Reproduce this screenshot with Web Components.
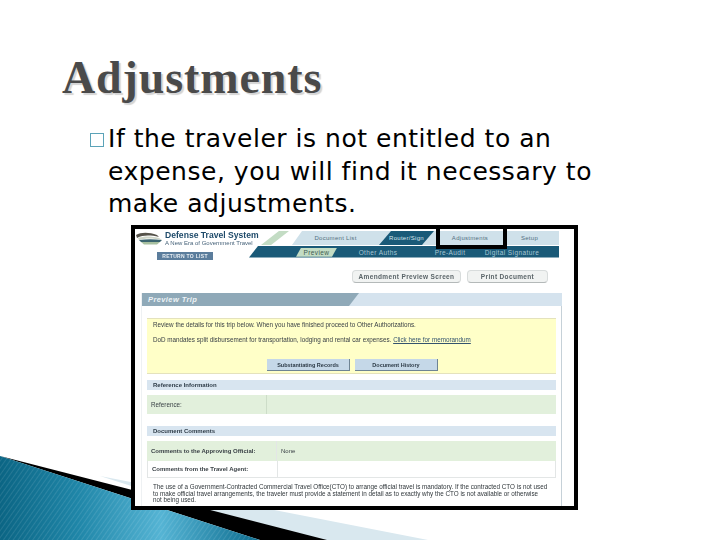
<!DOCTYPE html>
<html>
<head>
<meta charset="utf-8">
<style>
  html, body { margin: 0; padding: 0; background: #fff; }
</style>
</head>
<body>
<slide-page>
  <slide-title>Adjustments</slide-title>
  <slide-bullet>If the traveler is not entitled to an expense, you will find it necessary to make adjustments.</slide-bullet>
  <dts-shot>
    <dts-header></dts-header>
    <dts-actions></dts-actions>
    <dts-panel></dts-panel>
  </dts-shot>
</slide-page>

<script>
class SlidePage extends HTMLElement {
    constructor() {
        super();
        this.attachShadow({ mode: 'open' });
        this.shadowRoot.innerHTML = `
            <style>
                :host { display: block; position: relative; width: 720px; height: 540px; overflow: hidden; background: #fff; }
                .corner { position: absolute; left: 0; top: 0; }
                .content { position: relative; display: flex; flex-direction: column; }
            </style>
            <svg class="corner" width="720" height="540" viewBox="0 0 720 540">
                <defs>
                    <linearGradient id="teal" x1="0" y1="0" x2="1" y2="0">
                        <stop offset="0" stop-color="#0b6584"/>
                        <stop offset="0.3" stop-color="#1f86a8"/>
                        <stop offset="0.62" stop-color="#55b4d4"/>
                        <stop offset="1" stop-color="#0d6c8e"/>
                    </linearGradient>
                    <pattern id="stripes" width="4" height="4" patternUnits="userSpaceOnUse" patternTransform="rotate(35)">
                        <rect width="1" height="4" fill="#ffffff" opacity="0.1"/>
                    </pattern>
                </defs>
                <polygon points="100,476 428,540 300,540" fill="#d9e8ef"/>
                <polygon points="0,456 327,540 260,540" fill="#000"/>
                <polygon points="0,456 260,540 0,540" fill="url(#teal)"/>
                <polygon points="0,456 260,540 0,540" fill="url(#stripes)"/>
            </svg>
            <div class="content"><slot></slot></div>
        `;
    }
}

class SlideTitle extends HTMLElement {
    constructor() {
        super();
        this.attachShadow({ mode: 'open' });
        this.shadowRoot.innerHTML = `
            <style>
                :host {
                    display: block;
                    height: 52px;
                    padding: 52px 0 0 62px;
                    font: bold 46px/52px "Liberation Serif", serif;
                    letter-spacing: 0.9px;
                    color: #4a4a4a;
                    text-shadow: 2px 2px 1px #d4d4d4;
                }
            </style>
            <slot></slot>
        `;
    }
}

class SlideBullet extends HTMLElement {
    constructor() {
        super();
        this.attachShadow({ mode: 'open' });
        this.shadowRoot.innerHTML = `
            <style>
                :host {
                    display: flex;
                    height: 102px;
                    padding: 19px 0 0 90px;
                    font: 25px/32.5px "DejaVu Sans", sans-serif;
                    letter-spacing: 0.52px;
                    color: #000;
                }
                .box { flex: none; width: 12px; height: 12px; margin: 10px 4px 0 0; border: 1.5px solid #5ba3b8; }
                .text { width: 500px; }
            </style>
            <span class="box"></span>
            <div class="text"><slot></slot></div>
        `;
    }
}

class DtsShot extends HTMLElement {
    constructor() {
        super();
        this.attachShadow({ mode: 'open' });
        this.shadowRoot.innerHTML = `
            <style>
                :host {
                    display: flex;
                    flex-direction: column;
                    box-sizing: border-box;
                    width: 447px;
                    height: 285px;
                    margin-left: 131px;
                    border: 4px solid #000;
                    background: #fff;
                    overflow: hidden;
                    font-family: "Liberation Sans", sans-serif;
                }
            </style>
            <slot></slot>
        `;
    }
}

class DtsHeader extends HTMLElement {
    constructor() {
        super();
        this.attachShadow({ mode: 'open' });
        this.shadowRoot.innerHTML = `
            <style>
                :host { display: flex; height: 30px; padding-top: 2px; position: relative; filter: blur(0.3px); }
                .brand { width: 127px; flex: none; }
                .top { display: flex; gap: 2px; height: 14px; }
                .logo { flex: none; }
                .name { font-size: 8.6px; line-height: 9px; font-weight: bold; color: #1e4a6a; white-space: nowrap; }
                .tag { font-size: 6px; line-height: 7px; color: #47637a; white-space: nowrap; }
                .back {
                    width: 56px; height: 8px; margin: 7px 0 0 22px;
                    background: #5b7d9c; color: #e8eef3;
                    font: bold 5px/8px "Liberation Sans", sans-serif;
                    text-align: center; letter-spacing: 0.3px; white-space: nowrap;
                }
                .nav { flex: none; width: 298px; margin-left: -1px; }
                .row1 { display: flex; height: 14px; align-items: stretch; font-size: 6px; letter-spacing: 0.3px; color: #54707f; }
                .slant { width: 28px; background: #c3dcc4; clip-path: polygon(64% 0, 100% 0, 36% 100%, 0 100%); flex: none; }
                .tabs { flex: 1; display: grid; grid-template-columns: 87px 55px 72px 1fr; background: #cfe1ea;
                        clip-path: polygon(10px 0, 100% 0, 100% 100%, 0 100%); margin-left: 3px; }
                .tab { display: flex; align-items: center; justify-content: center; }
                .tab.last { padding-right: 6px; }
                .tab.active { background: #1a5a78; color: #d9e6ed; clip-path: polygon(12px 0, 100% 0, calc(100% - 12px) 100%, 0 100%); }
                .row2 { display: flex; height: 11.5px; padding-top: 1px; box-sizing: border-box; margin: 1px 0 0 -12px; background: #1a5a78; color: #a9c6d4;
                        font-size: 6.5px; letter-spacing: 0.4px; align-items: center; white-space: nowrap;
                        clip-path: polygon(9px 0, 100% 0, 100% 100%, 0 100%); }
                .row2 span { text-align: center; flex: none; }
                .row2 .on { width: 41px; height: 9px; line-height: 9px; margin-left: 47px; margin-right: 16px;
                            background: #c3dcc4; color: #3c5a52;
                            clip-path: polygon(5px 0, 100% 0, calc(100% - 5px) 100%, 0 100%); }
            </style>
            <div class="brand">
                <div class="top">
                    <svg class="logo" width="28" height="14" viewBox="0 0 28 14">
                        <path d="M1 4 C6 1 14 1 22 4 L24 6 C15 4 8 4 2 7Z" fill="#55524a"/>
                        <path d="M3 7 C9 5 16 5 24 7 L27 9 C18 7 10 7 4 9Z" fill="#cfd6c8"/>
                        <path d="M4 9 C11 8 19 8 27 9 L25 11 L6 11Z" fill="#3b6470"/>
                        <path d="M6 11 L25 11 L22 13.5 L9 13.5Z" fill="#a8c0a0"/>
                    </svg>
                    <div>
                        <div class="name">Defense Travel System</div>
                        <div class="tag">A New Era of Government Travel</div>
                    </div>
                </div>
                <div class="back">RETURN TO LIST</div>
            </div>
            <div class="nav">
                <div class="row1">
                    <div class="slant"></div>
                    <div class="tabs">
                        <div class="tab">Document List</div>
                        <div class="tab active">Router/Sign</div>
                        <div class="tab">Adjustments</div>
                        <div class="tab last">Setup</div>
                    </div>
                </div>
                <div class="row2">
                    <span class="on">Preview</span>
                    <span style="width:50px">Other Auths</span>
                    <span style="width:50px;margin-left:22px">Pre-Audit</span>
                    <span style="width:74px">Digital Signature</span>
                </div>
            </div>
        `;
    }
}

class DtsActions extends HTMLElement {
    constructor() {
        super();
        this.attachShadow({ mode: 'open' });
        this.shadowRoot.innerHTML = `
            <style>
                :host { display: flex; gap: 6px; height: 13px; margin: 9px 0 10px 217px; filter: blur(0.3px); }
                .btn {
                    display: flex; align-items: center; justify-content: center;
                    height: 13px; box-sizing: border-box;
                    border: 1px solid #d8dcdc; border-bottom-color: #b4b9b9; border-radius: 4px;
                    background: #f1f3f2; color: #5a6468;
                    font: bold 6.5px "Liberation Sans", sans-serif; letter-spacing: 0.35px; white-space: nowrap;
                }
            </style>
            <div class="btn" style="width:109px">Amendment Preview Screen</div>
            <div class="btn" style="width:81px">Print Document</div>
        `;
    }
}

class DtsPanel extends HTMLElement {
    constructor() {
        super();
        this.attachShadow({ mode: 'open' });
        this.shadowRoot.innerHTML = `
            <style>
                :host {
                    display: block; box-sizing: border-box; width: 421px; height: 213px; margin-left: 6px;
                    border-right: 1.5px solid #c6d1d8; border-left: 1px solid #eef1f3;
                    font-size: 6.3px; color: #3a4146; filter: blur(0.3px);
                }
                .bar { height: 13px; background: #d5e3ee; margin-right: -1px; }
                .bar div {
                    width: 217px; height: 13px; background: #8fa9b8; color: #eef3f6;
                    font: italic bold 7.5px/13px "Liberation Sans", sans-serif; padding-left: 6px; box-sizing: border-box;
                    clip-path: polygon(0 0, 100% 0, calc(100% - 10px) 100%, 0 100%); letter-spacing: 0.4px;
                }
                .body { padding: 12px 5px 0; }
                .note {
                    height: 56px; box-sizing: border-box; padding: 3px 6px 0;
                    background: #ffffc8; border-top: 1px solid #e4e2bd; border-bottom: 1px solid #e4e2bd;
                    display: flex; flex-direction: column;
                }
                .note p { margin: 0 0 9px; line-height: 6px; white-space: nowrap; }
                .note u { color: #33536e; }
                .btns { display: flex; gap: 5px; margin: 7px 0 0 114px; }
                .btns div {
                    width: 83px; height: 12px; line-height: 12px; text-align: center; box-sizing: border-box;
                    background: #c5d8e8; border-right: 1px solid #6e8494; border-bottom: 1px solid #6e8494;
                    color: #2c3a46; font-weight: bold; font-size: 5.5px;
                }
                .sec { height: 10px; line-height: 10px; padding-left: 6px; background: #d8e5f0; font-weight: bold; color: #2d3b47; font-size: 6px; }
                .sec.first { margin-top: 6px; }
                .row { display: grid; align-items: center; }
                .row > div { display: flex; align-items: center; height: 100%; padding-left: 4px; font-weight: bold; font-size: 6px; white-space: nowrap; }
                .row > div + div { font-weight: normal; }
                .ref { grid-template-columns: 120px 1fr; height: 19px; margin: 5px 0 12px; background: #e2f0dc; }
                .ref > div:first-child { border-right: 1px solid #cdddc8; font-weight: normal; font-size: 6.3px; }
                .cmt { grid-template-columns: 130px 1fr; }
                .cmt > div:first-child { border-right: 1px solid #e3e6e6; }
                .c1 { height: 20px; margin-top: 5px; background: #e2f0dc; }
                .c2 { height: 17px; border: 1px solid #e3e6e6; border-width: 0 1px 1px; box-sizing: border-box; }
                .fine { margin: 6px 0 0 6px; line-height: 6.6px; color: #2f363a; white-space: nowrap; }
                .fine span { letter-spacing: 0.03px; }
            </style>
            <div class="bar"><div>Preview Trip</div></div>
            <div class="body">
                <div class="note">
                    <p>Review the details for this trip below. When you have finished proceed to Other Authorizations.</p>
                    <p>DoD mandates split disbursement for transportation, lodging and rental car expenses. <u>Click here for memorandum</u></p>
                    <div class="btns"><div>Substantiating Records</div><div>Document History</div></div>
                </div>
                <div class="sec first">Reference Information</div>
                <div class="row ref"><div>Reference:</div><div></div></div>
                <div class="sec">Document Comments</div>
                <div class="row cmt c1"><div>Comments to the Approving Official:</div><div>None</div></div>
                <div class="row cmt c2"><div>Comments from the Travel Agent:</div><div></div></div>
                <div class="fine">The use of a Government-Contracted Commercial Travel Office(CTO) to arrange official travel is mandatory. If the contracted CTO is not used<br>to make official travel arrangements, the traveler must provide a statement in detail as to exactly why the CTO is not available or otherwise<br>not being used.</div>
            </div>
        `;
    }
}

// black box the slide author drew over the Adjustments tab
class DtsMarker extends HTMLElement {
    constructor() {
        super();
        this.attachShadow({ mode: 'open' });
        this.shadowRoot.innerHTML = `
            <style>
                :host { position: absolute; left: 436px; top: 225px; width: 71px; height: 24px; box-sizing: border-box; border: 4px solid #000; }
            </style>
        `;
    }
}

customElements.define('slide-page', SlidePage);
customElements.define('slide-title', SlideTitle);
customElements.define('slide-bullet', SlideBullet);
customElements.define('dts-shot', DtsShot);
customElements.define('dts-header', DtsHeader);
customElements.define('dts-actions', DtsActions);
customElements.define('dts-panel', DtsPanel);
customElements.define('dts-marker', DtsMarker);

document.querySelector('slide-page').appendChild(document.createElement('dts-marker'));
</script>
</body>
</html>
